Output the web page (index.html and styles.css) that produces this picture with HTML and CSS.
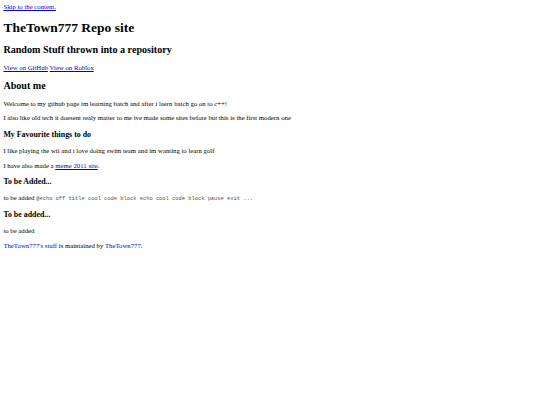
FILE: index.html
```html
<!DOCTYPE html>
<html lang="en">
<head>
<meta charset="UTF-8">
<title>TheTown777 Repo site</title>
<link rel="stylesheet" href="styles.css">
</head>
<body>
<a id="skip-to-content" href="#content">Skip to the content.</a>
<header class="page-header" role="banner">
  <h1 class="project-name">TheTown777 Repo site</h1>
  <h2 class="project-tagline">Random Stuff thrown into a repository</h2>
  <a href="#" class="btn">View on GitHub</a>
  <a href="#" class="btn">View on Roblox</a>
</header>
<main id="content" class="main-content" role="main">
  <h2 id="about-me">About me</h2>
  <p>Welcome to my github page im learning batch and after i laern batch go on to c++!</p>
  <p>I also like old tech it doesent realy matter to me ive made some sites before but this is the first modern one</p>
  <h3 id="my-favourite-things-to-do">My Favourite things to do</h3>
  <p>I like playing the wii and i love doing swim team and im wanting to learn golf</p>
  <p>I have also made a <a href="#">meme 2011 site</a>.</p>
  <h3 id="to-be-added">To be Added...</h3>
  <p>to be added <code class="code">@echo off title cool code block echo cool code block pause exit ...</code></p>
  <h3 id="to-be-added-1">To be added...</h3>
  <p>to be added</p>
  <footer class="site-footer">
    <span class="site-footer-owner"><a href="#">TheTown777's stuff</a> is maintained by <a href="#">TheTown777</a>.</span>
  </footer>
</main>
</body>
</html>
```
FILE: styles.css
```css
html {
  background: #fff;
}
body {
  margin: 3.375px;
  font-family: "Liberation Serif", "Times New Roman", serif;
  font-size: 6.75px;
  line-height: 1.15;
  color: #000;
}
a {
  color: #0000ee;
}
p {
  margin: 6.75px 0;
}
.page-header h1 {
  font-size: 13.5px;
  margin: 8.55px 0;
  line-height: 1.15;
}
h2 {
  font-size: 10.125px;
  margin: 8.4px 0;
  line-height: 1.15;
}
h3 {
  font-size: 7.9px;
  margin: 7.9px 0;
  line-height: 1.15;
}
.code {
  font-family: "Liberation Mono", "Courier New", monospace;
  font-size: 5.4px;
  color: #555;
}
```
